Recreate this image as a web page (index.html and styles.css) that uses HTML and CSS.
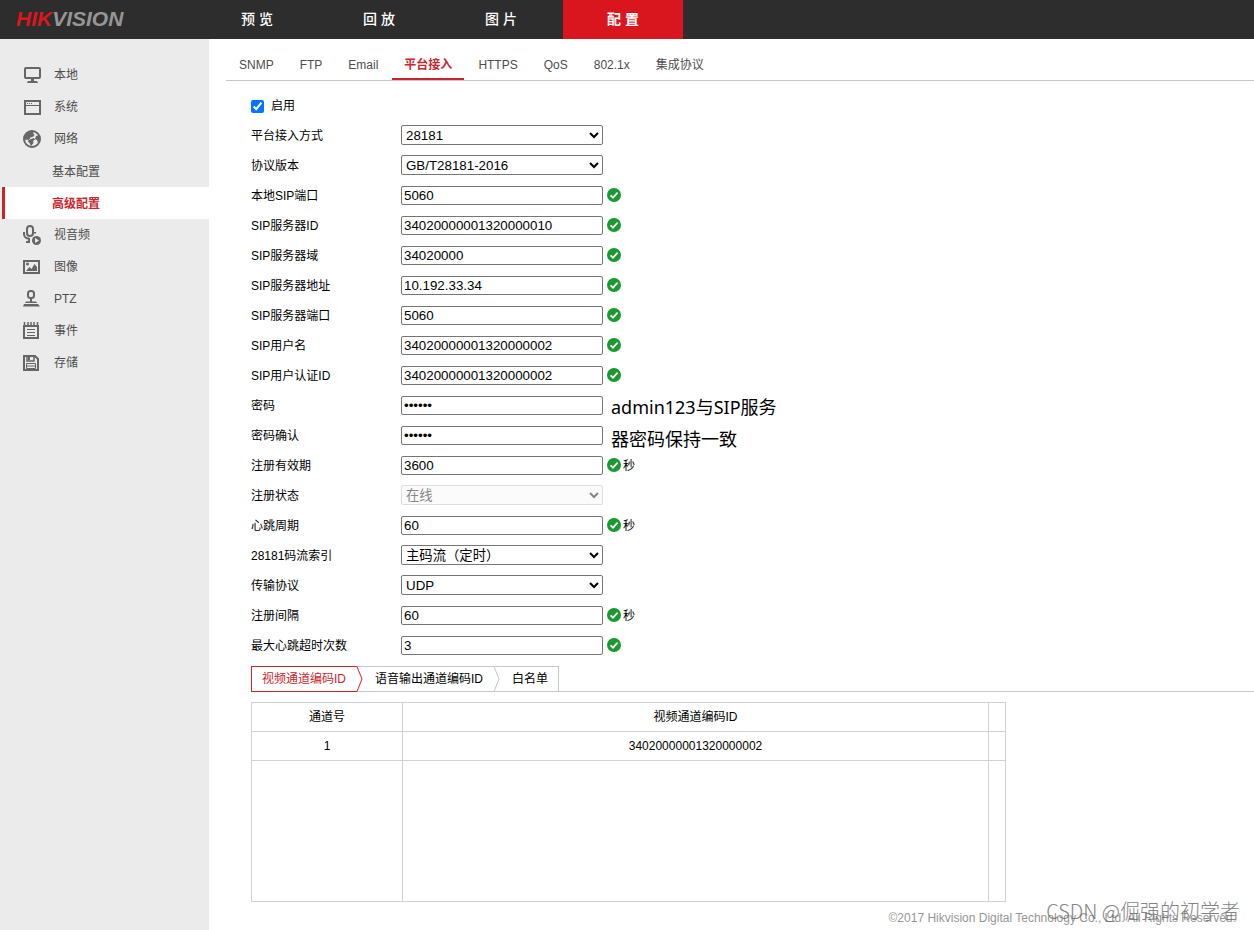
FILE: index.html
```html
<!DOCTYPE html>
<html lang="zh-CN">
<head>
<meta charset="utf-8">
<title>配置</title>
<link rel="stylesheet" href="styles.css">
</head>
<body>
<svg class="defs" aria-hidden="true">
  <symbol id="ok" viewBox="0 0 14 14"><circle cx="7" cy="7" r="7" fill="#189a2e"/><path d="M3.500 7.300 6 9.700l4.600-5" fill="none" stroke="#fff" stroke-width="1.800"/></symbol>
</svg>
<header class="topbar">
  <div class="logo"><span class="logo-red">HIK</span>VISION</div>
  <nav class="mainnav">
    <a href="#">预 览</a>
    <a href="#">回 放</a>
    <a href="#">图 片</a>
    <a href="#" class="on">配 置</a>
  </nav>
</header>
<div class="body">
  <nav class="sidebar">
    <a href="#" class="item"><svg class="icon" viewBox="0 0 20 20"><rect x="3" y="3" width="15" height="10" rx="1" fill="none" stroke="#666" stroke-width="2"/><path d="M9 13h3v3H9zM6 16h9l1 2H5z" fill="#666"/></svg>本地</a>
    <a href="#" class="item"><svg class="icon" viewBox="0 0 20 20"><path d="M3 4h15v13H3z" fill="none" stroke="#666" stroke-width="2"/><path d="M3 8.500h15" stroke="#666"/><path d="M5 6.500h1M7 6.500h1M9 6.500h1" stroke="#666"/></svg>系统</a>
    <a href="#" class="item"><svg class="icon" viewBox="0 0 20 20"><circle cx="10" cy="10" r="8" fill="none" stroke="#666" stroke-width="2"/><path d="M2 9 4 4l5-2.500 3 1-1 2 1.500 1-1 2-3 1-1.500 2.500-3-.5-1 1zM9 10l3-1 1 1.500-2 1.500.5 2-2.500 3-1.500-3-2-2zM14 7l3-1 1 5-2 3-1-3-2-1z" fill="#666"/></svg>网络</a>
    <a href="#" class="sub">基本配置</a>
    <a href="#" class="sub on">高级配置</a>
    <a href="#" class="item"><svg class="icon" viewBox="0 0 20 20"><rect x="5" y="1" width="6" height="10" rx="3" fill="none" stroke="#666" stroke-width="2"/><path d="M2 7v2c0 2.500 2 4.500 5 4.500M7 13v4M4 17h4M13 7v1.500" fill="none" stroke="#666" stroke-width="2"/><circle cx="14.500" cy="15.500" r="4.500" fill="#666"/><path d="M13 13l4 2.500-4 2.500z" fill="#ebebeb"/></svg>视音频</a>
    <a href="#" class="item"><svg class="icon" viewBox="0 0 20 20"><path d="M2 4h15v12H2z" fill="none" stroke="#666" stroke-width="2"/><circle cx="5.500" cy="7" r="1.500" fill="#666"/><path d="M4 14l3.500-4 2 2 3-5 2.500 3v4z" fill="#666"/></svg>图像</a>
    <a href="#" class="item"><svg class="icon" viewBox="0 0 20 20"><rect x="6" y="2" width="6" height="7" rx="2.500" fill="none" stroke="#666" stroke-width="2"/><path d="M8 9h2v4H8zM4 12.500h10l1 1.500H3zM2 15h14l2 2.500H1z" fill="#666"/></svg>PTZ</a>
    <a href="#" class="item"><svg class="icon" viewBox="0 0 20 20"><path d="M2 5h14v12H2z" fill="none" stroke="#666" stroke-width="2"/><path d="M2.500 1v4M6 1v4M9 1v4M12 1v4M15.500 1v4" stroke="#666" stroke-width="1.500"/><path d="M5 8.500h8M5 11.500h8M5 14.500h8" stroke="#666"/></svg>事件</a>
    <a href="#" class="item"><svg class="icon" viewBox="0 0 20 20"><path d="M2 3h11l3 3v11H2z" fill="none" stroke="#666" stroke-width="2"/><path d="M5 3v5h7V3" fill="none" stroke="#666" stroke-width="1.500"/><path d="M7 3v4" stroke="#666" stroke-width="2"/><path d="M4.500 10.500h9v5h-9zM5 13h8" fill="none" stroke="#666"/></svg>存储</a>
  </nav>
  <main class="main">
    <nav class="tabs">
      <a href="#">SNMP</a>
      <a href="#">FTP</a>
      <a href="#">Email</a>
      <a href="#" class="on">平台接入</a>
      <a href="#">HTTPS</a>
      <a href="#">QoS</a>
      <a href="#">802.1x</a>
      <a href="#">集成协议</a>
    </nav>
    <form class="form">
      <div class="row enable"><input type="checkbox" id="enable" checked><label for="enable">启用</label></div>
      <div class="row"><label for="mode">平台接入方式</label><select id="mode"><option>28181</option></select></div>
      <div class="row"><label for="ver">协议版本</label><select id="ver"><option>GB/T28181-2016</option></select></div>
      <div class="row"><label for="lport">本地SIP端口</label><input type="text" id="lport" value="5060"><svg class="ok"><use href="#ok"/></svg></div>
      <div class="row"><label for="sid">SIP服务器ID</label><input type="text" id="sid" value="34020000001320000010"><svg class="ok"><use href="#ok"/></svg></div>
      <div class="row"><label for="sdom">SIP服务器域</label><input type="text" id="sdom" value="34020000"><svg class="ok"><use href="#ok"/></svg></div>
      <div class="row"><label for="saddr">SIP服务器地址</label><input type="text" id="saddr" value="10.192.33.34"><svg class="ok"><use href="#ok"/></svg></div>
      <div class="row"><label for="sport">SIP服务器端口</label><input type="text" id="sport" value="5060"><svg class="ok"><use href="#ok"/></svg></div>
      <div class="row"><label for="user">SIP用户名</label><input type="text" id="user" value="34020000001320000002"><svg class="ok"><use href="#ok"/></svg></div>
      <div class="row"><label for="auth">SIP用户认证ID</label><input type="text" id="auth" value="34020000001320000002"><svg class="ok"><use href="#ok"/></svg></div>
      <div class="row"><label for="pw">密码</label><input type="password" id="pw" value="123456"><p class="note">admin123与SIP服务<br>器密码保持一致</p></div>
      <div class="row"><label for="pw2">密码确认</label><input type="password" id="pw2" value="123456"></div>
      <div class="row"><label for="valid">注册有效期</label><input type="text" id="valid" value="3600"><svg class="ok"><use href="#ok"/></svg><span class="unit">秒</span></div>
      <div class="row"><label for="state">注册状态</label><select id="state" disabled><option>在线</option></select></div>
      <div class="row"><label for="beat">心跳周期</label><input type="text" id="beat" value="60"><svg class="ok"><use href="#ok"/></svg><span class="unit">秒</span></div>
      <div class="row"><label for="stream">28181码流索引</label><select id="stream"><option>主码流（定时）</option></select></div>
      <div class="row"><label for="proto">传输协议</label><select id="proto"><option>UDP</option></select></div>
      <div class="row"><label for="gap">注册间隔</label><input type="text" id="gap" value="60"><svg class="ok"><use href="#ok"/></svg><span class="unit">秒</span></div>
      <div class="row"><label for="max">最大心跳超时次数</label><input type="text" id="max" value="3"><svg class="ok"><use href="#ok"/></svg></div>
    </form>
    <div class="steps">
      <button type="button" class="step on">视频通道编码ID</button>
      <svg class="arrow" viewBox="0 0 7 26"><path d="M1 .5h6M1 25.500h6" stroke="#c8c8c8"/><path d="M0 .5h1l5 12.500-5 12.500H0" fill="none" stroke="#c9252d"/></svg>
      <button type="button" class="step">语音输出通道编码ID</button>
      <svg class="arrow" viewBox="0 0 7 26"><path d="M0 .5h7M0 25.500h7M1 .5l5 12.500-5 12.500" fill="none" stroke="#c8c8c8"/></svg>
      <button type="button" class="step last">白名单</button>
    </div>
    <table class="grid">
      <colgroup><col class="c1"><col><col class="c3"></colgroup>
      <thead><tr><th>通道号</th><th>视频通道编码ID</th><th></th></tr></thead>
      <tbody>
        <tr><td>1</td><td>34020000001320000002</td><td></td></tr>
        <tr class="blank"><td></td><td></td><td></td></tr>
      </tbody>
    </table>
    <footer class="footer">©2017 Hikvision Digital Technology Co., Ltd. All Rights Reserved.</footer>
  </main>
</div>
<div class="watermark">CSDN @倔强的初学者</div>
</body>
</html>
```
FILE: styles.css
```css
* { box-sizing: border-box; }
body {
  margin: 0;
  min-height: 100vh;
  display: flex;
  flex-direction: column;
  background: #fff;
  color: #000;
  font: 12px/16px "Liberation Sans", "Noto Sans CJK SC", sans-serif;
}
a { color: inherit; text-decoration: none; }
.defs { display: none; }

.topbar { display: flex; height: 39px; background: #2d2d2d; color: #fff; }
.logo {
  width: 197px;
  padding-left: 16px;
  color: #969696;
  font-size: 21px;
  font-weight: 700;
  font-style: italic;
  line-height: 38px;
}
.logo-red { color: #d8171f; }
.mainnav { display: flex; gap: 2px; }
.mainnav a {
  width: 120px;
  text-align: center;
  font-size: 14px;
  font-weight: 500;
  line-height: 39px;
}
.mainnav .on { background: #d9161e; font-weight: 700; }

.body { flex: 1; display: flex; }
.sidebar { flex: none; width: 209px; padding-top: 20px; background: #ebebeb; color: #4d4d4d; }
.item { display: flex; align-items: center; gap: 12px; height: 32px; padding-left: 22px; }
.icon { width: 20px; height: 20px; overflow: visible; }
.sub { display: block; height: 32px; margin-left: 2px; padding-left: 50px; line-height: 34px; }
.sub.on {
  padding-left: 47px;
  border-left: 3px solid #c9252d;
  background: #fff;
  color: #c9252d;
  font-weight: 700;
}

.main { flex: 1; display: flex; flex-direction: column; }
.tabs {
  display: flex;
  gap: 2px;
  height: 42px;
  margin-left: 17px;
  padding-left: 1px;
  border-bottom: 1px solid #c8c8c8;
  color: #4d4d4d;
}
.tabs a { height: 41px; padding: 18px 12px 0; }
.tabs .on { border-bottom: 2px solid #c9252d; color: #c9252d; font-weight: 700; }

.form { padding: 9px 0 0 42px; }
.row { position: relative; display: flex; align-items: center; height: 30px; }
.row label { width: 150px; padding-top: 2px; }
.row.enable { padding-top: 2px; }
.row.enable label { padding-top: 0; }
.row input[type="text"], .row input[type="password"], .row select {
  width: 202px;
  height: 19px;
  border: 1px solid #767676;
  border-radius: 2px;
  font-family: "Liberation Sans", "Noto Sans CJK SC", sans-serif;
}
.row select { height: 20px; padding: 0; background: #fff; color: #000; }
.row select:disabled { border-color: #d0d0d0; background: #fafafa; color: #545454; }
.row input[type="checkbox"] { width: 13px; height: 13px; margin: 0 7px 0 0; }
.ok { width: 14px; height: 14px; margin-left: 4px; }
.unit { margin-left: 2px; padding-top: 2px; }
.note {
  position: absolute;
  left: 360px;
  top: 1px;
  margin: 0;
  font: 18px/32px "Noto Sans", "Noto Sans CJK SC", sans-serif;
  white-space: nowrap;
}

.steps { display: flex; margin: 6px 0 0 42px; border-bottom: 1px solid #c8c8c8; }
.step {
  height: 26px;
  margin-bottom: -1px;
  padding: 0 10px 0 12px;
  border: solid #c8c8c8;
  border-width: 1px 0;
  background: #fff;
  color: #000;
  font: 12px/16px "Liberation Sans", "Noto Sans CJK SC", sans-serif;
}
.step.on { padding-left: 10px; border-color: #c9252d; border-left-width: 1px; color: #c9252d; }
.step.last { border-right-width: 1px; }
.arrow { width: 7px; height: 26px; margin-bottom: -1px; }

.grid {
  width: calc(100% - 42px);
  max-width: 755px;
  margin: 10px 0 0 42px;
  border-collapse: collapse;
  table-layout: fixed;
}
.c1 { width: 151px; }
.c3 { width: 17px; }
.grid th, .grid td {
  height: 29px;
  padding: 0;
  border: 1px solid #d2d2d2;
  text-align: center;
  font-weight: 400;
}
.grid .blank td { height: 141px; }
.footer { padding: 8px 18px 4px; color: #969696; text-align: right; }
.watermark {
  position: absolute;
  right: 14px;
  bottom: 7px;
  color: #666;
  opacity: 0.8;
  font: 300 20px/24px "Noto Sans CJK SC", sans-serif;
}
```
